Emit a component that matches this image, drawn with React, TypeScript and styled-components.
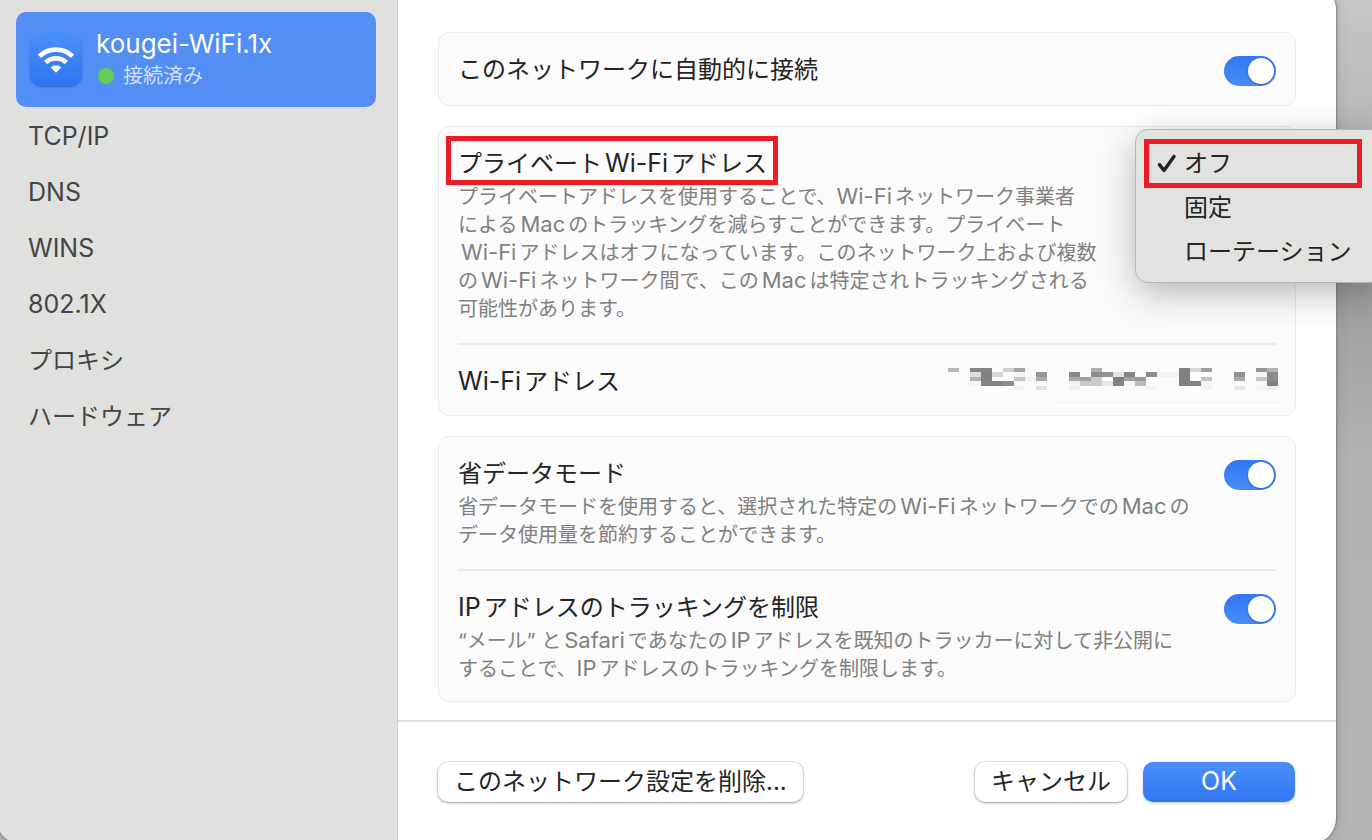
import React from "react";
import styled, { createGlobalStyle } from "styled-components";

const GlobalStyle = createGlobalStyle`
  *, *::before, *::after { box-sizing: border-box; }
  body {
    margin: 0;
    font-family: Inter, "Noto Sans CJK JP", sans-serif;
    font-size: 24px;
    line-height: 32px;
    color: #242424;
  }
  button { font: inherit; color: inherit; border: 0; cursor: pointer; }
  h2, p, ul { margin: 0; padding: 0; font: inherit; }
`;

const Desktop = styled.div`
  display: flex;
  min-height: 100vh;
  overflow: hidden;
  background: linear-gradient(180deg, #c6c6c6 0, #b4b4b4 160px, #a0a0a0 300px, #b2b2b2 460px, #b4b4b4 100%);
`;

const Window = styled.div`
  display: flex;
  flex: 1;
  min-width: 0;
  margin: -16px 36px -4px -4px;
  padding-top: 16px;
  border-radius: 26px;
  background: linear-gradient(90deg, #e0e0de 401px, #ffffff 401px);
  box-shadow: 0 0 2px 1px #808080, 0 0 14px rgba(0, 0, 0, 0.12);
`;

const Sidebar = styled.nav`
  flex: 0 0 402px;
  padding: 12px 21px 12px 20px;
  border-right: 1px solid #cfcfcd;
`;

const Network = styled.button`
  display: flex;
  align-items: center;
  gap: 14px;
  width: 100%;
  height: 95px;
  margin-bottom: 2px;
  padding: 0 14px;
  border-radius: 10px;
  background: #538ef5;
  color: #ffffff;
  text-align: left;
`;

const NetworkIcon = styled.span`
  display: flex;
  align-items: center;
  justify-content: center;
  width: 52px;
  height: 52px;
  border-radius: 12px;
  background: linear-gradient(#4a8ff8, #2f73f3);
  box-shadow: 0 1px 2px rgba(0, 30, 120, 0.4);
`;

const NetworkText = styled.span`
  display: flex;
  flex-direction: column;
`;

const NetworkName = styled.span`
  font-size: 26px;
`;

const Status = styled.span`
  display: flex;
  align-items: center;
  gap: 9px;
  padding-left: 2px;
  font-size: 20px;
  color: #cfdffc;
`;

const Dot = styled.span`
  width: 16px;
  height: 16px;
  border-radius: 50%;
  background: #65cb57;
`;

const SidebarItem = styled.button`
  display: block;
  width: 100%;
  height: 56px;
  padding: 0 12px;
  background: none;
  color: #454544;
  text-align: left;
`;

const Main = styled.main`
  display: flex;
  flex: 1;
  flex-direction: column;
  min-width: 0;
`;

const Cards = styled.div`
  display: flex;
  flex: 1;
  flex-direction: column;
  gap: 20px;
  padding: 32px 40px 18px;
`;

const Card = styled.section`
  position: relative;
  padding: 0 19px;
  border: 1px solid #ececec;
  border-radius: 11px;
  background: #fbfbfb;
`;

const Row = styled.div`
  display: flex;
  align-items: flex-start;
  justify-content: space-between;
  padding: 21px 0 19px;

  & + & {
    padding-bottom: 17px;
    border-top: 2px solid #ebebeb;
  }
`;

const Title = styled.h2<{ $marked?: boolean }>`
  position: relative;
  width: max-content;
  white-space: nowrap;

  &::after {
    content: ${(p) => (p.$marked ? '""' : "none")};
    position: absolute;
    inset: -12px -11px -5px -12px;
    border: 5px solid #ed1c24;
  }
`;

const Description = styled.p`
  && { margin: 3px 0 1px; }
  font-size: 20px;
  line-height: 28px;
  color: #808080;
  white-space: nowrap;
`;

const LatinRun = styled.span<{ $small?: boolean; $before?: boolean; $after?: boolean }>`
  margin-left: ${(p) => (p.$before ? "3px" : "0")};
  margin-right: ${(p) => (p.$after ? "3px" : "0")};
  font-size: ${(p) => (p.$small ? "22px" : "25px")};
  line-height: 1;
`;

const Switch = styled.input`
  flex: none;
  appearance: none;
  width: 52px;
  height: 30px;
  margin: 2px 0 0;
  padding: 2px;
  border-radius: 15px;
  background: linear-gradient(#3377f4, #488cf7);

  &::before {
    content: "";
    display: block;
    width: 26px;
    height: 26px;
    margin-left: 22px;
    border-radius: 50%;
    background: #ffffff;
    box-shadow: 0 1px 2px rgba(0, 20, 90, 0.4);
  }
`;

const Redacted = styled.svg`
  flex: none;
  margin: 2px -10px -10px 0;
`;

const Menu = styled.div`
  position: absolute;
  z-index: 1;
  top: 2px;
  right: -87px;
  width: 247px;
  padding: 12px 10px 8px;
  border: 1px solid #b5b5b4;
  border-radius: 13px;
  background: #e2e2e0;
  box-shadow: 0 10px 36px rgba(0, 0, 0, 0.28);
`;

const MenuItem = styled.button<{ $marked?: boolean }>`
  position: relative;
  display: grid;
  grid-template-columns: 27px 1fr;
  align-items: center;
  width: 100%;
  height: 44px;
  padding: 0 0 0 11px;
  background: none;
  text-align: left;
  white-space: nowrap;

  &::after {
    content: ${(p) => (p.$marked ? '""' : "none")};
    position: absolute;
    inset: -3px 9px -2px -2px;
    border: 5px solid #ed1c24;
  }
`;

const Footer = styled.footer`
  display: flex;
  gap: 16px;
  padding: 40px 41px 42px 40px;
  border-top: 2px solid #dedede;
`;

const Button = styled.button<{ $primary?: boolean; $push?: boolean }>`
  height: 40px;
  min-width: 152px;
  margin-right: ${(p) => (p.$push ? "auto" : "0")};
  padding: 0 16px;
  border-radius: 10px;
  white-space: nowrap;
  color: ${(p) => (p.$primary ? "#ffffff" : "#242424")};
  background: ${(p) => (p.$primary ? "linear-gradient(#4a8ff8, #3276f5)" : "#ffffff")};
  box-shadow: ${(p) =>
    p.$primary ? "0 1px 2px rgba(50, 118, 245, 0.4)" : "0 0 0 1px rgba(0, 0, 0, 0.08), 0 1px 3px rgba(0, 0, 0, 0.32)"};
`;

/* Latin words are set a little larger than the kana around them, with a thin gap on each side. */
function Mixed({ text, small }: { text: string; small?: boolean }) {
  const parts = text.split(/([A-Za-z0-9][A-Za-z0-9./-]*)/).filter(Boolean);
  return (
    <>
      {parts.map((part, i) =>
        /^[A-Za-z0-9]/.test(part) ? (
          <LatinRun
            key={i}
            $small={small}
            $before={parts.length > 1 && (small || i > 0) && !parts[i - 1]?.endsWith("、")}
            $after={i < parts.length - 1}
          >
            {part}
          </LatinRun>
        ) : (
          <React.Fragment key={i}>{part}</React.Fragment>
        )
      )}
    </>
  );
}

function Lines({ lines }: { lines: string[] }) {
  return (
    <Description>
      {lines.map((line, i) => (
        <React.Fragment key={i}>
          {i > 0 && <br />}
          <Mixed text={line} small />
        </React.Fragment>
      ))}
    </Description>
  );
}

/* [column, shade] pairs for each band of the pixelated address */
const bands: { y: number; h: number; cells: [number, string][] }[] = [
  { y: 0, h: 4, cells: [[0, "b8"], [2, "84"], [3, "84"], [5, "cf"], [6, "a3"], [13, "ae"], [21, "80"], [22, "d8"], [23, "a0"], [28, "98"], [29, "b3"]] },
  { y: 4, h: 5, cells: [[2, "dd"], [3, "80"], [4, "d6"], [6, "f5"], [8, "95"], [11, "88"], [13, "8d"], [14, "92"], [15, "e2"], [16, "86"], [18, "8c"], [19, "f2"], [20, "f2"], [21, "80"], [26, "92"], [28, "f5"], [29, "88"]] },
  { y: 9, h: 4, cells: [[2, "b3"], [3, "80"], [6, "c5"], [7, "f2"], [8, "aa"], [11, "aa"], [12, "a2"], [13, "cc"], [14, "ff"], [15, "80"], [16, "a3"], [17, "98"], [21, "80"], [23, "c6"], [26, "aa"], [28, "c5"], [29, "8c"]] },
  { y: 13, h: 5, cells: [[2, "f5"], [3, "84"], [4, "84"], [5, "8c"], [11, "f5"], [12, "c9"], [13, "cc"], [14, "e8"], [15, "84"], [16, "f5"], [17, "bb"], [21, "80"], [22, "84"], [23, "f5"], [29, "80"]] },
  { y: 18, h: 4, cells: [[6, "f3"], [8, "e2"], [11, "f0"], [16, "f8"], [18, "f3"], [23, "f3"], [26, "e8"], [28, "f5"], [29, "ee"]] },
];

function RedactedAddress() {
  return (
    <Redacted width="338" height="40" viewBox="0 0 338 40" shapeRendering="crispEdges" aria-hidden="true">
      {bands.map((band) =>
        band.cells.map(([col, shade]) => (
          <rect key={`${band.y}-${col}`} x={col * 11} y={band.y} width="11" height={band.h} fill={`#${shade.repeat(3)}`} />
        ))
      )}
      <rect x="108" y="36" width="230" height="3" fill="#ffffff" />
    </Redacted>
  );
}

function WifiGlyph() {
  return (
    <svg width="38" height="30" viewBox="0 0 38 30" fill="none" aria-hidden="true">
      <path d="M2.4 11.2C11.6 2.4 26.4 2.4 35.6 11.2" stroke="#fff" strokeWidth="4.8" />
      <path d="M8.7 17.5C14.4 12.1 23.6 12.1 29.3 17.5" stroke="#fff" strokeWidth="4.8" />
      <path d="M13.8 22.4C16.8 19.6 21.2 19.6 24.2 22.4L19 27.8Z" fill="#fff" />
    </svg>
  );
}

const sidebarItems = ["TCP/IP", "DNS", "WINS", "802.1X", "プロキシ", "ハードウェア"];
const menuItems = ["オフ", "固定", "ローテーション"];

export default function App() {
  return (
    <>
      <GlobalStyle />
      <Desktop>
        <Window>
          <Sidebar>
            <Network>
              <NetworkIcon>
                <WifiGlyph />
              </NetworkIcon>
              <NetworkText>
                <NetworkName>kougei-WiFi.1x</NetworkName>
                <Status>
                  <Dot />
                  接続済み
                </Status>
              </NetworkText>
            </Network>
            {sidebarItems.map((item) => (
              <SidebarItem key={item}>
                <Mixed text={item} />
              </SidebarItem>
            ))}
          </Sidebar>
          <Main>
            <Cards>
              <Card>
                <Row>
                  <Title>
                    <label htmlFor="auto-join">このネットワークに自動的に接続</label>
                  </Title>
                  <Switch id="auto-join" type="checkbox" role="switch" defaultChecked />
                </Row>
              </Card>
              <Card>
                <Row>
                  <div>
                    <Title $marked>
                      <Mixed text="プライベートWi-Fiアドレス" />
                    </Title>
                    <Lines
                      lines={[
                        "プライベートアドレスを使用することで、Wi-Fiネットワーク事業者",
                        "によるMacのトラッキングを減らすことができます。プライベート",
                        "Wi-Fiアドレスはオフになっています。このネットワーク上および複数",
                        "のWi-Fiネットワーク間で、このMacは特定されトラッキングされる",
                        "可能性があります。",
                      ]}
                    />
                  </div>
                </Row>
                <Row>
                  <Title>
                    <Mixed text="Wi-Fiアドレス" />
                  </Title>
                  <RedactedAddress />
                </Row>
                <Menu role="menu">
                  {menuItems.map((item, i) => (
                    <MenuItem key={item} role="menuitemradio" aria-checked={i === 0} $marked={i === 0}>
                      <span>
                        {i === 0 && (
                          <svg width="20" height="20" viewBox="0 0 20 20" fill="none" display="block" aria-hidden="true">
                            <path d="M2.4 10.6L7 16.4L17 2.4" stroke="#242424" strokeWidth="3.4" strokeLinecap="round" strokeLinejoin="round" />
                          </svg>
                        )}
                      </span>
                      {item}
                    </MenuItem>
                  ))}
                </Menu>
              </Card>
              <Card>
                <Row>
                  <div>
                    <Title>
                      <label htmlFor="low-data">省データモード</label>
                    </Title>
                    <Lines
                      lines={[
                        "省データモードを使用すると、選択された特定のWi-FiネットワークでのMacの",
                        "データ使用量を節約することができます。",
                      ]}
                    />
                  </div>
                  <Switch id="low-data" type="checkbox" role="switch" defaultChecked />
                </Row>
                <Row>
                  <div>
                    <Title>
                      <label htmlFor="limit-tracking">
                        <Mixed text="IPアドレスのトラッキングを制限" />
                      </label>
                    </Title>
                    <Lines
                      lines={[
                        "“メール” とSafariであなたのIPアドレスを既知のトラッカーに対して非公開に",
                        "することで、IPアドレスのトラッキングを制限します。",
                      ]}
                    />
                  </div>
                  <Switch id="limit-tracking" type="checkbox" role="switch" defaultChecked />
                </Row>
              </Card>
            </Cards>
            <Footer>
              <Button $push>このネットワーク設定を削除...</Button>
              <Button>キャンセル</Button>
              <Button $primary>
                <Mixed text="OK" />
              </Button>
            </Footer>
          </Main>
        </Window>
      </Desktop>
    </>
  );
}
